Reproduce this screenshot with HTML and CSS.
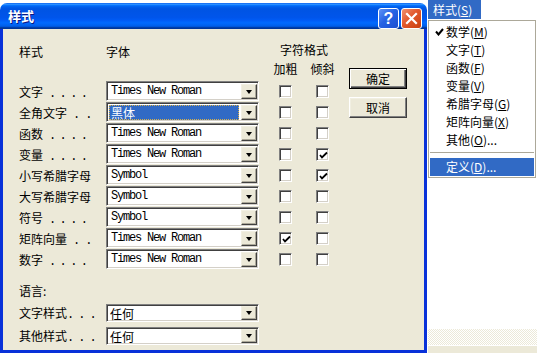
FILE: index.html
```html
<!DOCTYPE html>
<html lang="zh-CN">
<head>
    <meta charset="UTF-8">
    <title>样式</title>
    <link rel="stylesheet" href="styles.css">
</head>
<body>
<div class="screen">
    <div class="dialog">
        <div class="titlebar">
            <span class="title">样式</span>
            <div class="caption-buttons">
                <span class="cap-btn help">?</span>
                <span class="cap-btn close">
                    <svg width="13" height="13" viewBox="0 0 13 13"><path d="M2 2 L11 11 M11 2 L2 11" stroke="#fff" stroke-width="2.2" stroke-linecap="square"/></svg>
                </span>
            </div>
        </div>
        <div class="client">
            <div class="form">
                <div class="fields">
                    <div class="head">
                        <span class="label">样式</span>
                        <span class="head-font">字体</span>
                        <span class="head-format">字符格式</span>
                    </div>
                    <div class="head2">
                        <div class="checks">
                            <span class="cell">加粗</span>
                            <span class="cell">倾斜</span>
                        </div>
                    </div>

                    <div class="row">
                        <span class="label">文字<span class="dots d4">....</span></span>
                        <div class="combo"><span class="combo-text">Times New Roman</span><span class="combo-btn"><i class="arrow"></i></span></div>
                        <div class="checks"><span class="cell"><span class="checkbox"></span></span><span class="cell"><span class="checkbox"></span></span></div>
                    </div>
                    <div class="row">
                        <span class="label">全角文字<span class="dots d2">..</span></span>
                        <div class="combo"><span class="combo-text selected">黑体</span><span class="combo-btn"><i class="arrow"></i></span></div>
                        <div class="checks"><span class="cell"><span class="checkbox"></span></span><span class="cell"><span class="checkbox"></span></span></div>
                    </div>
                    <div class="row">
                        <span class="label">函数<span class="dots d4">....</span></span>
                        <div class="combo"><span class="combo-text">Times New Roman</span><span class="combo-btn"><i class="arrow"></i></span></div>
                        <div class="checks"><span class="cell"><span class="checkbox"></span></span><span class="cell"><span class="checkbox"></span></span></div>
                    </div>
                    <div class="row">
                        <span class="label">变量<span class="dots d4">....</span></span>
                        <div class="combo"><span class="combo-text">Times New Roman</span><span class="combo-btn"><i class="arrow"></i></span></div>
                        <div class="checks"><span class="cell"><span class="checkbox"></span></span><span class="cell"><span class="checkbox checked"><svg width="9" height="9" viewBox="0 0 9 9"><path d="M1 4 L3 6.5 L8 1.5" fill="none" stroke="#000" stroke-width="1.8"/></svg></span></span></div>
                    </div>
                    <div class="row">
                        <span class="label">小写希腊字母</span>
                        <div class="combo"><span class="combo-text">Symbol</span><span class="combo-btn"><i class="arrow"></i></span></div>
                        <div class="checks"><span class="cell"><span class="checkbox"></span></span><span class="cell"><span class="checkbox checked"><svg width="9" height="9" viewBox="0 0 9 9"><path d="M1 4 L3 6.5 L8 1.5" fill="none" stroke="#000" stroke-width="1.8"/></svg></span></span></div>
                    </div>
                    <div class="row">
                        <span class="label">大写希腊字母</span>
                        <div class="combo"><span class="combo-text">Symbol</span><span class="combo-btn"><i class="arrow"></i></span></div>
                        <div class="checks"><span class="cell"><span class="checkbox"></span></span><span class="cell"><span class="checkbox"></span></span></div>
                    </div>
                    <div class="row">
                        <span class="label">符号<span class="dots d4">....</span></span>
                        <div class="combo"><span class="combo-text">Symbol</span><span class="combo-btn"><i class="arrow"></i></span></div>
                        <div class="checks"><span class="cell"><span class="checkbox"></span></span><span class="cell"><span class="checkbox"></span></span></div>
                    </div>
                    <div class="row">
                        <span class="label">矩阵向量<span class="dots d2">..</span></span>
                        <div class="combo"><span class="combo-text">Times New Roman</span><span class="combo-btn"><i class="arrow"></i></span></div>
                        <div class="checks"><span class="cell"><span class="checkbox checked"><svg width="9" height="9" viewBox="0 0 9 9"><path d="M1 4 L3 6.5 L8 1.5" fill="none" stroke="#000" stroke-width="1.8"/></svg></span></span><span class="cell"><span class="checkbox"></span></span></div>
                    </div>
                    <div class="row">
                        <span class="label">数字<span class="dots d4">....</span></span>
                        <div class="combo"><span class="combo-text">Times New Roman</span><span class="combo-btn"><i class="arrow"></i></span></div>
                        <div class="checks"><span class="cell"><span class="checkbox"></span></span><span class="cell"><span class="checkbox"></span></span></div>
                    </div>
                </div>
                <div class="buttons">
                    <button class="btn default">确定</button>
                    <button class="btn">取消</button>
                </div>
            </div>

            <div class="lang">
                <div class="lang-title">语言:</div>
                <div class="lang-row">
                    <span class="label">文字样式<span class="dots d3">...</span></span>
                    <div class="combo"><span class="combo-text cjk">任何</span><span class="combo-btn"><i class="arrow"></i></span></div>
                </div>
                <div class="lang-row">
                    <span class="label">其他样式<span class="dots d3">...</span></span>
                    <div class="combo"><span class="combo-text cjk">任何</span><span class="combo-btn"><i class="arrow"></i></span></div>
                </div>
            </div>
        </div>
    </div>

    <div class="side">
        <div class="menubar"><span class="menu-title">样式(<u>S</u>)</span></div>
        <ul class="dropdown">
            <li class="item"><span class="gutter"><svg width="9" height="8" viewBox="0 0 9 8"><path d="M1 3.5 L3.5 6.5 L8 1" fill="none" stroke="#000" stroke-width="2"/></svg></span>数学(<u>M</u>)</li>
            <li class="item"><span class="gutter"></span>文字(<u>T</u>)</li>
            <li class="item"><span class="gutter"></span>函数(<u>F</u>)</li>
            <li class="item"><span class="gutter"></span>变量(<u>V</u>)</li>
            <li class="item"><span class="gutter"></span>希腊字母(<u>G</u>)</li>
            <li class="item"><span class="gutter"></span>矩阵向量(<u>X</u>)</li>
            <li class="item"><span class="gutter"></span>其他(<u>O</u>)...</li>
            <li class="separator"></li>
            <li class="item active"><span class="gutter"></span>定义(<u>D</u>)...</li>
        </ul>
        <div class="fill"></div>
        <div class="hatch"></div>
        <div class="strip"></div>
    </div>
</div>
</body>
</html>
```

FILE: styles.css
```css
body {
    margin: 0;
    width: 537px;
    height: 353px;
    overflow: hidden;
    background: #fff;
    font-family: "Noto Sans CJK SC", sans-serif;
    font-size: 12px;
    color: #000;
}

.screen {
    display: flex;
    height: 353px;
}

/* dialog window */

.dialog {
    width: 427px;
    margin-top: 3px;
    display: flex;
    flex-direction: column;
}

.titlebar {
    height: 26px;
    box-sizing: border-box;
    padding: 0 5px 0 8px;
    border-radius: 7px 7px 0 0;
    display: flex;
    align-items: center;
    justify-content: space-between;
    background: linear-gradient(to bottom, #0058ee 0%, #3593ff 4%, #288eff 6%, #127dff 8%, #036ffc 10%, #0262ee 14%, #0057e5 20%, #0054e3 24%, #0055eb 56%, #005bf5 66%, #026afe 76%, #0062ef 86%, #0052d6 92%, #0040ab 94%, #003092 100%);
}

.title {
    color: #fff;
    font-weight: bold;
    font-size: 13px;
    line-height: 16px;
    text-shadow: 1px 1px #0a1883;
}

.caption-buttons {
    display: flex;
    gap: 2px;
    margin-top: 4px;
}

.cap-btn {
    width: 21px;
    height: 21px;
    box-sizing: border-box;
    border: 1px solid #fff;
    border-radius: 3px;
    display: flex;
    align-items: center;
    justify-content: center;
    color: #fff;
}

.help {
    background: linear-gradient(135deg, #5f93f5 0%, #2662e4 45%, #1a4fd0 100%);
    font-family: "Liberation Sans", Arial, sans-serif;
    font-weight: bold;
    font-size: 16px;
    line-height: 19px;
}

.close {
    background: linear-gradient(135deg, #f09270 0%, #e2582c 45%, #c9400f 100%);
}

.client {
    flex: 1;
    background: #ece9d8;
    border: 3px solid #0831d9;
    border-top: 0;
    padding: 15px 0 0 16px;
}

.form {
    display: flex;
}

.fields {
    width: 322px;
}

.head {
    display: flex;
    height: 17px;
}

.head .label {
    line-height: 16px;
}

.head-font {
    width: 153px;
    line-height: 16px;
}

.head-format {
    width: 74px;
    margin-left: 8px;
    text-align: center;
    line-height: 12px;
}

.head2 {
    height: 20px;
    padding-left: 240px;
    line-height: 16px;
}

.row {
    display: flex;
    height: 21px;
}

.label {
    width: 87px;
    flex-shrink: 0;
    line-height: 21px;
    white-space: nowrap;
}

.dots {
    font-family: "Liberation Mono", monospace;
    font-size: 12px;
    letter-spacing: 3.4px;
}

.d4 { margin-left: 6px; }
.d2 { margin-left: 6px; letter-spacing: 5px; }
.d3 { margin-left: 0; letter-spacing: 4px; }

/* sunken combo box */

.combo {
    width: 153px;
    height: 20px;
    box-sizing: border-box;
    background: #fff;
    border: 1px solid;
    border-color: #808080 #fff #fff #808080;
    box-shadow: inset 1px 1px #404040, inset -1px -1px #d4d0c8;
    padding: 2px 1px 1px 2px;
    display: flex;
}

.combo-text {
    flex: 1;
    font-family: "Liberation Mono", monospace;
    font-size: 12px;
    letter-spacing: -1.2px;
    line-height: 15px;
    padding-left: 2px;
    white-space: nowrap;
}

.combo-text.cjk {
    font-family: "Noto Sans CJK SC", sans-serif;
    font-size: 12px;
    letter-spacing: 0;
    padding-left: 1px;
}

.combo-text.selected {
    font-family: "Noto Sans CJK SC", sans-serif;
    font-size: 12px;
    letter-spacing: 0;
    background: #316ac5;
    color: #fff;
    outline: 1px dotted #d8b04a;
    outline-offset: -1px;
    margin: 0 2px 0 0;
}

.combo-btn {
    width: 16px;
    height: 15px;
    box-sizing: border-box;
    background: #ece9d8;
    border: 1px solid;
    border-color: #f1efe2 #404040 #404040 #f1efe2;
    box-shadow: inset -1px -1px #aca899;
    display: flex;
    align-items: center;
    justify-content: center;
}

.arrow {
    width: 0;
    height: 0;
    border-style: solid;
    border-width: 4px 3.5px 0;
    border-color: #000 transparent transparent;
}

/* check boxes */

.checks {
    display: flex;
    margin-left: 8px;
}

.cell {
    width: 37px;
    display: flex;
    justify-content: center;
    align-items: center;
}

.checkbox {
    width: 13px;
    height: 13px;
    box-sizing: border-box;
    background: #fff;
    border: 1px solid;
    border-color: #808080 #fff #fff #808080;
    box-shadow: inset 1px 1px #404040, inset -1px -1px #d4d0c8;
    display: flex;
    align-items: center;
    justify-content: center;
}

.checkbox svg {
    margin: 1px 0 0 1px;
}

/* push buttons */

.buttons {
    display: flex;
    flex-direction: column;
    gap: 8px;
    margin-left: 8px;
    padding-top: 24px;
}

.btn {
    width: 58px;
    height: 21px;
    padding: 0;
    font-family: "Noto Sans CJK SC", sans-serif;
    font-size: 12px;
    color: #000;
    background: #ece9d8;
    border: 1px solid;
    border-color: #fff #404040 #404040 #fff;
    box-shadow: inset -1px -1px #808080, inset 1px 1px #f1efe2;
}

.btn.default {
    border: 1px solid #000;
    box-shadow: inset 1px 1px #fff, inset -1px -1px #404040, inset -2px -2px #808080;
}

/* language */

.lang {
    margin-top: 13px;
}

.lang-title {
    line-height: 16px;
    margin-bottom: 5px;
}

.lang-row {
    display: flex;
    height: 23px;
}

.lang-row .label {
    line-height: 18px;
}

.lang-row .combo {
    height: 18px;
    padding-top: 1px;
}

.lang-row .combo-btn {
    height: 14px;
}

/* menu on the right */

.side {
    flex: 1;
    display: flex;
    flex-direction: column;
    padding-left: 1px;
}

.menubar {
    height: 19px;
    margin-bottom: 1px;
}

.menu-title {
    display: inline-block;
    background: #316ac5;
    color: #fff;
    line-height: 19px;
    padding: 0 6px 0 5px;
    width: 42px;
}

.dropdown {
    list-style: none;
    margin: 0;
    width: 108px;
    box-sizing: border-box;
    padding: 2px 1px 1px;
    border: 1px solid #aca899;
    background: #fff;
}

.item {
    height: 18px;
    line-height: 18px;
    display: flex;
    white-space: nowrap;
}

.item.active {
    background: #316ac5;
    color: #fff;
}

.gutter {
    width: 16px;
    display: flex;
    align-items: center;
    justify-content: center;
    padding-left: 2px;
    box-sizing: border-box;
}

.separator {
    height: 1px;
    margin: 3px 0 5px;
    background: #aca899;
}

.fill {
    flex: 1;
}

.hatch {
    height: 16px;
    background: repeating-conic-gradient(#ece9d8 0 25%, #fff 0 50%) 0 0 / 2px 2px;
}

.strip {
    height: 7px;
    margin-top: 1px;
    background: #ece9d8;
}
```
